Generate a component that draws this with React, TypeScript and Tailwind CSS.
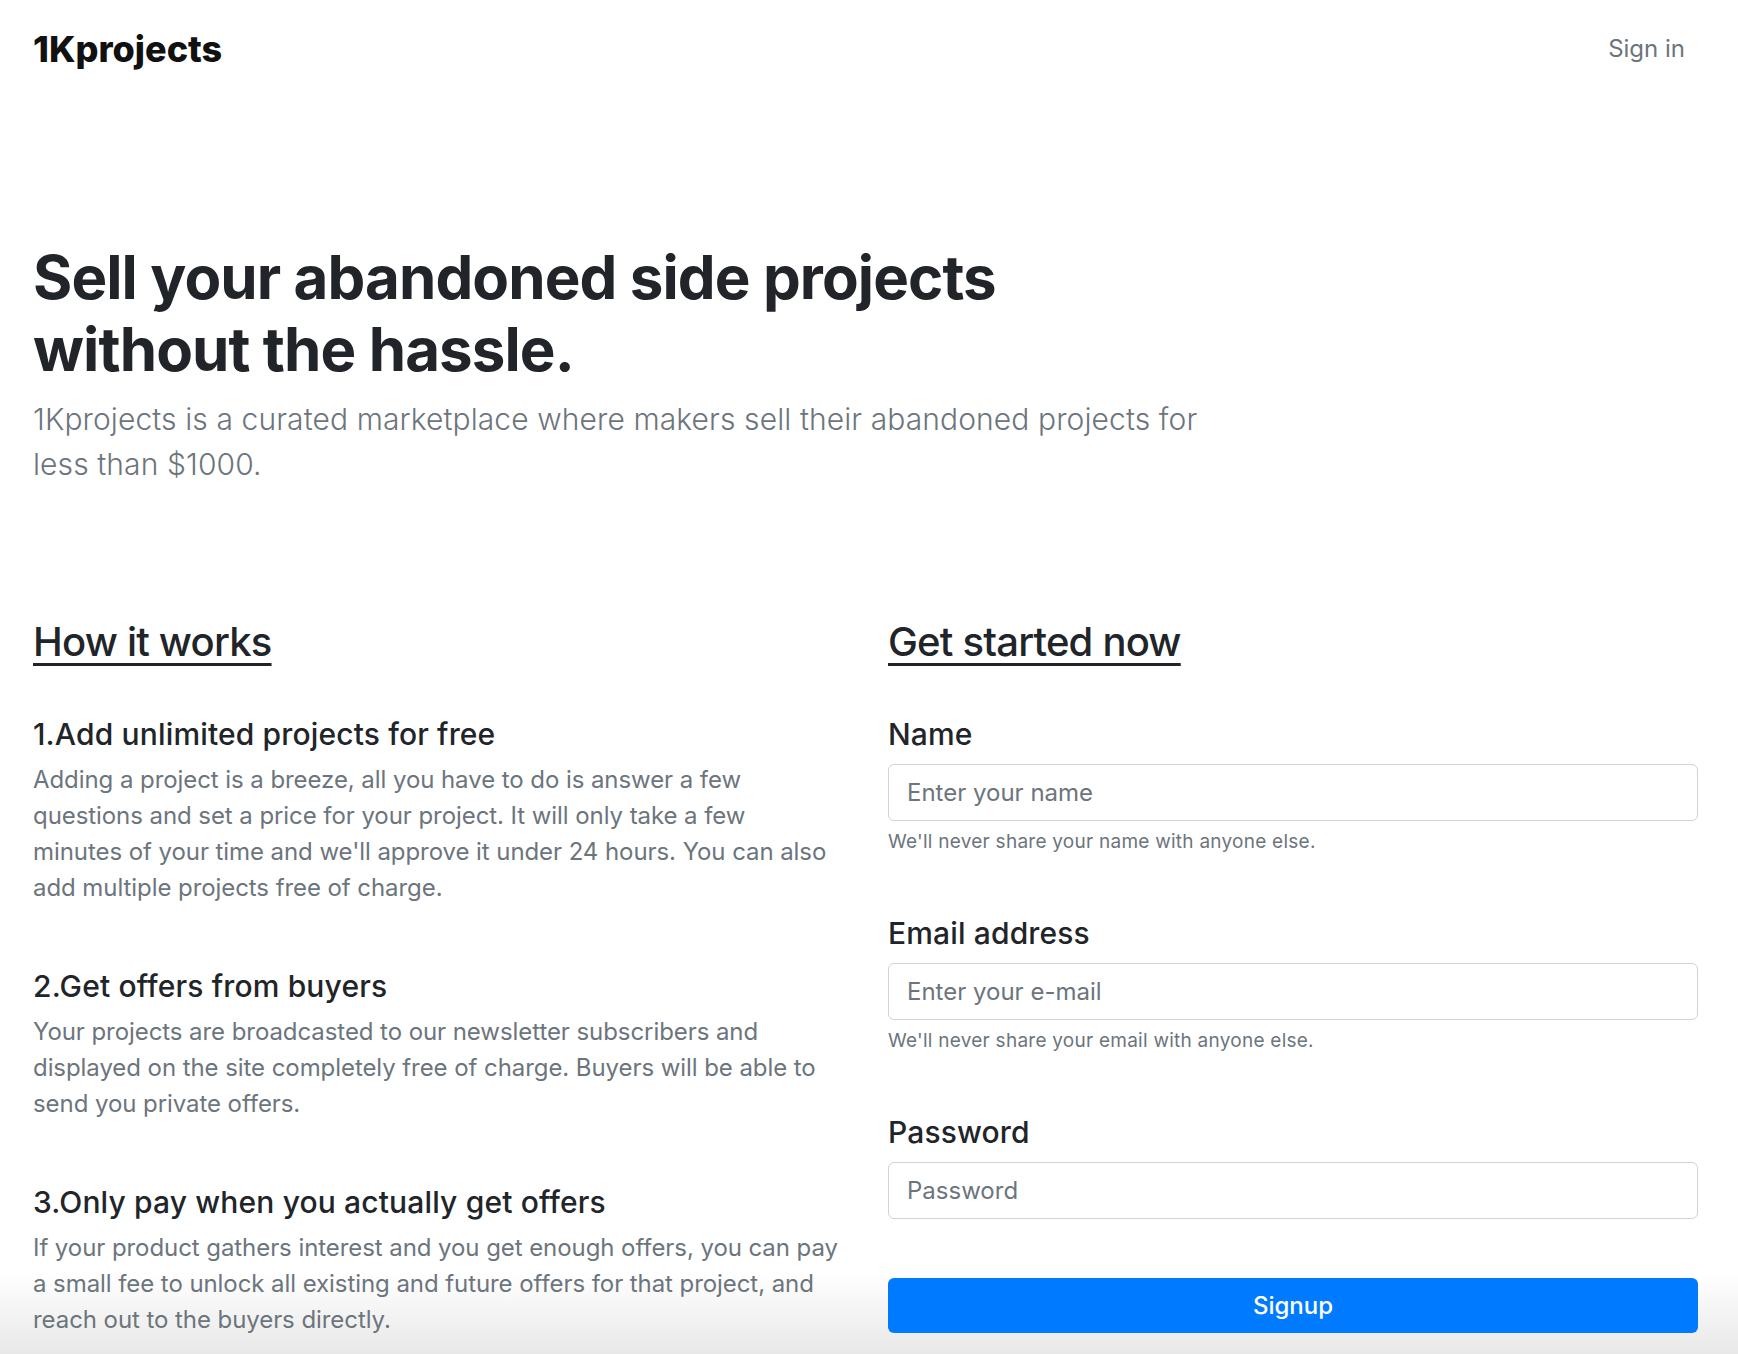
const STEPS = [
  {
    title: "1.Add unlimited projects for free",
    lines: [
      "Adding a project is a breeze, all you have to do is answer a few",
      "questions and set a price for your project. It will only take a few",
      "minutes of your time and we'll approve it under 24 hours. You can also",
      "add multiple projects free of charge.",
    ],
  },
  {
    title: "2.Get offers from buyers",
    lines: [
      "Your projects are broadcasted to our newsletter subscribers and",
      "displayed on the site completely free of charge. Buyers will be able to",
      "send you private offers.",
    ],
  },
  {
    title: "3.Only pay when you actually get offers",
    lines: [
      "If your product gathers interest and you get enough offers, you can pay",
      "a small fee to unlock all existing and future offers for that project, and",
      "reach out to the buyers directly.",
    ],
  },
];

const FIELDS = [
  { label: "Name", type: "text", placeholder: "Enter your name", help: "We'll never share your name with anyone else." },
  { label: "Email address", type: "email", placeholder: "Enter your e-mail", help: "We'll never share your email with anyone else." },
  { label: "Password", type: "password", placeholder: "Password", help: "" },
];

const font = "font-['Inter','Liberation_Sans',sans-serif]";
const subHeading = "text-[30px] leading-[36px] font-medium text-[#212529] tracking-[0.15px]";
const sectionTitle =
  "text-[40px] leading-[58px] font-medium tracking-[-0.8px] text-[#212529] underline decoration-[3px] underline-offset-[7px]";
const inputClass =
  "block w-full h-[57px] px-[18px] rounded-[6px] border border-[#ced4da] bg-white text-[24px] text-[#495057] placeholder:text-[#6c757d] outline-none";

export default function App() {
  return (
    <div
      className={`${font} min-h-screen text-[#212529] bg-[linear-gradient(to_bottom,#ffffff_calc(100%-80px),#e8e8e8)]`}
    >
      <header className="flex h-[98px] items-center justify-between pl-[33px] pr-[53px]">
        <span className="text-[36px] font-extrabold tracking-[0px] text-[#111]">1Kprojects</span>
        <a className="text-[24px] text-[#6c757d]">Sign in</a>
      </header>

      <main className="pl-[33px] pr-[40px] pt-[143px]">
        <h1 className="text-[60px] leading-[72px] font-bold tracking-[-0.9px] text-[#212529]">
          Sell your abandoned side projects
          <br />
          without the hassle.
        </h1>
        <p className="mt-[12px] text-[30px] leading-[45px] font-light tracking-[0.1px] text-[#6c757d]">
          1Kprojects is a curated marketplace where makers sell their abandoned projects for
          <br />
          less than $1000.
        </p>

        <div className="mt-[126px] grid grid-cols-2 gap-[45px]">
          <section>
            <h2 className={sectionTitle}>How it works</h2>
            <div className="mt-[45px] flex flex-col gap-[62px]">
              {STEPS.map((step) => (
                <div key={step.title}>
                  <h5 className={`${subHeading} mb-[10px]`}>{step.title}</h5>
                  <p className="text-[24px] leading-[36px] text-[#6c757d] whitespace-nowrap tracking-[-0.07px]">
                    {step.lines.map((line, i) => (
                      <span key={i} className="block">
                        {line}
                      </span>
                    ))}
                  </p>
                </div>
              ))}
            </div>
          </section>

          <section>
            <h2 className={sectionTitle}>Get started now</h2>
            <form className="mt-[45px] flex flex-col gap-[59px]" onSubmit={(e) => e.preventDefault()}>
              {FIELDS.map((field) => (
                <div key={field.label}>
                  <label className={`${subHeading} block mb-[12px]`}>{field.label}</label>
                  <input className={inputClass} type={field.type} placeholder={field.placeholder} />
                  {field.help && (
                    <small className="mt-[6px] block text-[19px] leading-[29px] tracking-[0.25px] text-[#6c757d]">
                      {field.help}
                    </small>
                  )}
                </div>
              ))}
              <button
                type="submit"
                className="h-[55px] w-full rounded-[6px] bg-[#007bff] text-[24px] font-medium text-white"
              >
                Signup
              </button>
            </form>
          </section>
        </div>
      </main>
    </div>
  );
}
